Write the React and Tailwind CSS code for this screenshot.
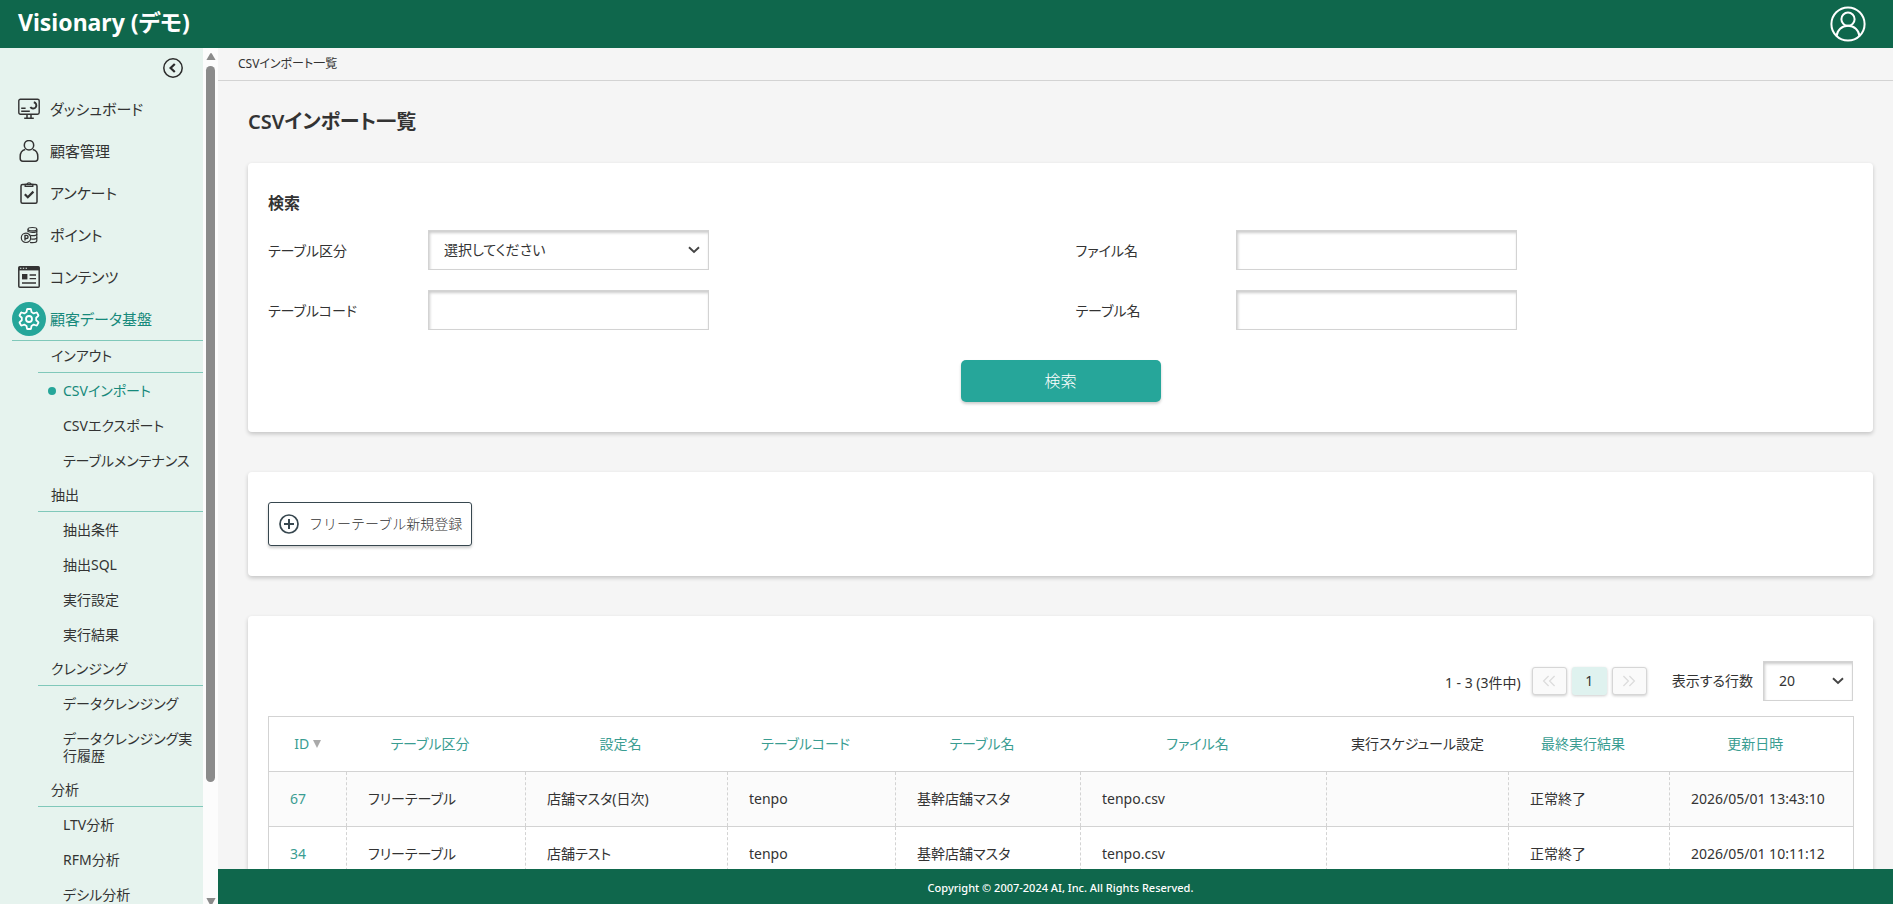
import React, { useState } from "react";

const DashboardIcon = () => (
  <svg viewBox="0 0 22 22" className="w-[22px] h-[22px]" fill="none" stroke="currentColor" strokeWidth="1.4">
    <rect x="0.8" y="1.2" width="20.4" height="15" rx="1.6" />
    <path d="M3.2 10.2h4.4M3.2 13.2h8.600" strokeWidth="1.600" />
    <path d="M15.800 4.200a3.200 3.200 0 1 1-3.400 4.800" strokeWidth="1.900" />
    <path d="M9 16.200v3.600M13 16.200v3.600M6.200 20.200h9.600" strokeWidth="1.500" />
  </svg>
);

const CustomerIcon = () => (
  <svg viewBox="0 0 22 22" className="w-[22px] h-[22px]" fill="none" stroke="currentColor" strokeWidth="1.5">
    <circle cx="11" cy="5.2" r="4.7" />
    <path d="M7.200 9.400C4 10.200 2.200 13 2.200 16.400v2.200c0 1.600 1 2.600 2.600 2.600h12.400c1.600 0 2.600-1 2.600-2.600v-2.200c0-3.400-1.800-6.200-5-7" />
  </svg>
);

const SurveyIcon = () => (
  <svg viewBox="0 0 22 22" className="w-[22px] h-[22px]" fill="none" stroke="currentColor" strokeWidth="1.5">
    <rect x="3" y="2.4" width="16" height="18.8" rx="1.5" />
    <path d="M7.200 2.400v2h7.600v-2l-1.600-.2a2.300 1.800 0 0 0-4.400 0z" strokeWidth="1.300" />
    <path d="M6.800 12.200l3 3 5.600-5.600" strokeWidth="2.200" />
  </svg>
);

const PointIcon = () => (
  <svg viewBox="0 0 22 22" className="w-[22px] h-[22px]" fill="none" stroke="currentColor" strokeWidth="1.2">
    <ellipse cx="14.4" cy="5.2" rx="4.4" ry="1.7" />
    <path d="M10 5.200v3M18.800 5.200v11.600c0 1.200-2 1.900-4.400 1.900-.9 0-1.700-.1-2.400-.3" />
    <path d="M10.200 7.400c.8.7 2.400 1 4.200 1 2.400 0 4.400-.7 4.400-1.700M12.400 11.400c.6.100 1.300.2 2 .2 2.400 0 4.400-.7 4.400-1.700M13 15c.5.100 1 .1 1.400.1 2.400 0 4.400-.7 4.400-1.700" />
    <circle cx="8" cy="13.8" r="4.7" />
    <path d="M7 16.600v-5.200h1.500a1.500 1.500 0 0 1 0 3.100H7" strokeWidth="1.400" />
  </svg>
);

const ContentsIcon = () => (
  <svg viewBox="0 0 22 22" className="w-[22px] h-[22px]" fill="none" stroke="currentColor" strokeWidth="1.5">
    <rect x="0.8" y="0.8" width="20.4" height="20.4" rx="1" />
    <path d="M0.800 2.600h20.400" strokeWidth="3.600" />
    <path d="M2 2.300h1.400M4.800 2.300h1.400M7.600 2.300h1.400" stroke="#e6f3ee" strokeWidth="1.100" />
    <rect x="4" y="8" width="5.4" height="5.4" fill="currentColor" stroke="none" />
    <path d="M11.600 9h6.400M11.600 12.600h6.400M4 17h14" strokeWidth="1.400" />
  </svg>
);

const GearIcon = () => (
  <svg viewBox="0 0 24 24" className="w-6 h-6" fill="none" stroke="currentColor" strokeWidth="1.8" strokeLinejoin="round">
    <circle cx="12" cy="12" r="3" />
    <path d="M10.600 2h2.800q.5 0 .6.500l.5 2.600 2.200 1.300 2.500-.9q.5-.2.800.3l1.400 2.400q.2.500-.2.800l-2 1.700v2.600l2 1.700q.4.300.2.800l-1.400 2.400q-.3.500-.8.300l-2.500-.9-2.200 1.300-.5 2.600q-.1.500-.6.500h-2.800q-.5 0-.6-.5l-.5-2.600-2.200-1.300-2.500.9q-.5.200-.8-.3l-1.400-2.400q-.2-.5.200-.8l2-1.700v-2.600l-2-1.700q-.4-.3-.2-.8L4 5.800q.3-.5.8-.3l2.500.9 2.200-1.300.5-2.600q.1-.5.600-.5z" />
  </svg>
);

const ChevronIcon = () => (
  <svg viewBox="0 0 12 8" className="w-3 h-2" fill="none" stroke="#444" strokeWidth="1.9">
    <path d="M1 1.200l5 4.800 5-4.800" />
  </svg>
);

const menu = [
  { label: "ダッシュボード", Icon: DashboardIcon },
  { label: "顧客管理", Icon: CustomerIcon },
  { label: "アンケート", Icon: SurveyIcon },
  { label: "ポイント", Icon: PointIcon },
  { label: "コンテンツ", Icon: ContentsIcon },
  { label: "顧客データ基盤", Icon: GearIcon, active: true },
];

const subMenu = [
  { title: "インアウト", items: ["CSVインポート", "CSVエクスポート", "テーブルメンテナンス"] },
  { title: "抽出", items: ["抽出条件", "抽出SQL", "実行設定", "実行結果"] },
  { title: "クレンジング", items: ["データクレンジング", "データクレンジング実行履歴"] },
  { title: "分析", items: ["LTV分析", "RFM分析", "デシル分析"] },
];

const columns = [
  { label: "ID", width: "w-[78px]", sortable: true, sorted: true },
  { label: "テーブル区分", width: "w-[179px]", sortable: true },
  { label: "設定名", width: "w-[202px]", sortable: true },
  { label: "テーブルコード", width: "w-[168px]", sortable: true },
  { label: "テーブル名", width: "w-[185px]", sortable: true },
  { label: "ファイル名", width: "w-[246px]", sortable: true },
  { label: "実行スケジュール設定", width: "w-[182px]", sortable: false },
  { label: "最終実行結果", width: "w-[161px]", sortable: true },
  { label: "更新日時", width: "w-[184px]", sortable: true },
];

const rows = [
  ["67", "フリーテーブル", "店舗マスタ(日次)", "tenpo", "基幹店舗マスタ", "tenpo.csv", "", "正常終了", "2026/05/01 13:43:10"],
  ["34", "フリーテーブル", "店舗テスト", "tenpo", "基幹店舗マスタ", "tenpo.csv", "", "正常終了", "2026/05/01 10:11:12"],
];

const fieldClass =
  "h-10 border border-[#d3d3d3] bg-white px-[15px] text-sm text-[#333] shadow-[inset_1px_2px_3px_rgba(0,0,0,0.2)] outline-none";

const cardClass = "bg-white rounded px-5 shadow-[0_2px_4px_rgba(0,0,0,0.2)]";

function Header() {
  return (
    <header className="h-12 shrink-0 bg-[#0f674c] text-white flex items-center justify-between pl-[18px] pr-[27px]">
      <a href="#" className="text-[23px] leading-10 pb-1 font-bold">
        Visionary (デモ)
      </a>
      <button type="button" aria-label="アカウント">
        <svg viewBox="0 0 36 36" className="w-9 h-9" fill="none" stroke="currentColor" strokeWidth="2">
          <circle cx="18" cy="18" r="16.6" />
          <circle cx="18" cy="13.2" r="6.6" />
          <path d="M6.600 30c.6-6 5-10.200 11.400-10.200S28.800 24 29.400 30" />
        </svg>
      </button>
    </header>
  );
}

function Sidebar() {
  return (
    <aside className="w-[218px] shrink-0 flex overflow-hidden">
      <nav className="flex-1 bg-[#e6f3ee] overflow-hidden">
        <div className="h-10 flex justify-end pt-[10px] pr-5">
          <button type="button" aria-label="メニューを閉じる" className="h-5">
            <svg viewBox="0 0 20 20" className="w-5 h-5" fill="none" stroke="#2b2b2b">
              <circle cx="10" cy="10" r="9.2" strokeWidth="1.5" />
              <path d="M11.800 6L7.600 10l4.200 4" strokeWidth="2.200" />
            </svg>
          </button>
        </div>

        <ul className="pl-3">
          {menu.map(({ label, Icon, active }) => (
            <li key={label}>
              <a
                href="#"
                className={
                  active
                    ? "flex items-center gap-1 h-[43px] border-b border-[#80c8ba] text-[15px] text-[#16897b]"
                    : "flex items-center gap-1 h-[42px] text-[15px]"
                }
              >
                <span
                  className={
                    active
                      ? "w-[34px] h-[34px] rounded-full bg-[#26a69a] text-white flex items-center justify-center"
                      : "w-[34px] h-[34px] flex items-center justify-center"
                  }
                >
                  <Icon />
                </span>
                {label}
              </a>
            </li>
          ))}
        </ul>

        <div className="pl-[38px] text-sm leading-[17px]">
          {subMenu.map((group) => (
            <section key={group.title} className="group">
              <h3 className="pt-2 group-first:pt-[6px] pb-2 pl-[13px] border-b border-[#80c8ba]">
                {group.title}
              </h3>
              <ul>
                {group.items.map((item) => (
                  <li key={item}>
                    {item === "CSVインポート" ? (
                      <a href="#" className="flex items-center gap-[7px] py-[9px] pl-[10px] text-[#16897b]">
                        <span className="w-2 h-2 rounded-full bg-[#26a69a]" />
                        {item}
                      </a>
                    ) : (
                      <a href="#" className="block py-[9px] pl-[25px] pr-[9px]">
                        {item}
                      </a>
                    )}
                  </li>
                ))}
              </ul>
            </section>
          ))}
        </div>
      </nav>

      {/* scroll bar */}
      <div className="w-[15px] bg-[#fcfcfc] flex flex-col items-center pt-[5px]">
        <svg viewBox="0 0 10 7" className="w-[10px] h-[7px] shrink-0" fill="#8b8b8b">
          <path d="M4.200.6a1 1 0 0 1 1.600 0L9.600 7H.4z" />
        </svg>
        <div className="w-[9px] mt-[6px] basis-[716px] rounded-full bg-[#8b8b8b]" />
        <div className="flex-1" />
        <svg viewBox="0 0 10 6" className="w-[10px] h-[6px] shrink-0" fill="#8b8b8b">
          <path d="M.4 0h9.200L6.400 6H3.600z" />
        </svg>
      </div>
    </aside>
  );
}

function TextField({ id, label }) {
  return (
    <div className="flex items-center">
      <label htmlFor={id} className="w-40 pt-[2px] text-sm">
        {label}
      </label>
      <input id={id} type="text" className={`${fieldClass} w-[281px]`} />
    </div>
  );
}

function SearchCard() {
  return (
    <form className={`${cardClass} py-[30px]`} onSubmit={(e) => e.preventDefault()}>
      <h2 className="text-base leading-5 font-semibold mb-[17px]">検索</h2>
      <div className="grid grid-cols-2 gap-x-[30px] gap-y-5">
        <div className="flex items-center">
          <label htmlFor="table-type" className="w-40 pt-[2px] text-sm">
            テーブル区分
          </label>
          <div className="relative w-[281px]">
            <select id="table-type" className={`${fieldClass} w-full appearance-none`}>
              <option>選択してください</option>
            </select>
            <span className="absolute right-[9px] top-4 pointer-events-none">
              <ChevronIcon />
            </span>
          </div>
        </div>
        <TextField id="file-name" label="ファイル名" />
        <TextField id="table-code" label="テーブルコード" />
        <TextField id="table-name" label="テーブル名" />
      </div>
      <div className="mt-[30px] flex justify-center">
        <button
          type="submit"
          className="w-[200px] h-[42px] rounded-[5px] bg-[#26a69a] text-white text-base font-light shadow-[0_2px_3px_rgba(0,0,0,0.2)]"
        >
          検索
        </button>
      </div>
    </form>
  );
}

function Pagination() {
  const [size, setSize] = useState("20");

  return (
    <div className="flex items-center justify-end mb-[15px] text-sm">
      <span className="mr-[11px] pt-1">1 - 3 (3件中)</span>
      <div className="flex gap-[5px]">
        <button
          type="button"
          disabled
          aria-label="前へ"
          className="w-[35px] h-7 flex items-center justify-center rounded-[3px] border border-[#d6d6d6] bg-[#fafafa] text-[#dcdcdc] shadow-[0_1px_3px_rgba(0,0,0,0.2)]"
        >
          <svg viewBox="0 0 14 12" className="w-[14px] h-3" fill="none" stroke="currentColor" strokeWidth="1.3">
            <path d="M6.600 1l-5 5 5 5M12.600 1l-5 5 5 5" />
          </svg>
        </button>
        <button
          type="button"
          className="w-[35px] h-7 rounded-[3px] bg-[#dff2ef] shadow-[0_1px_3px_rgba(0,0,0,0.2)]"
        >
          1
        </button>
        <button
          type="button"
          disabled
          aria-label="次へ"
          className="w-[35px] h-7 flex items-center justify-center rounded-[3px] border border-[#d6d6d6] bg-[#fafafa] text-[#dcdcdc] shadow-[0_1px_3px_rgba(0,0,0,0.2)]"
        >
          <svg viewBox="0 0 14 12" className="w-[14px] h-3" fill="none" stroke="currentColor" strokeWidth="1.3">
            <path d="M1.400 1l5 5-5 5M7.400 1l5 5-5 5" />
          </svg>
        </button>
      </div>
      <label htmlFor="page-size" className="ml-[25px] mr-[10px]">
        表示する行数
      </label>
      <div className="relative w-[90px]">
        <select
          id="page-size"
          value={size}
          onChange={(e) => setSize(e.target.value)}
          className={`${fieldClass} w-full appearance-none`}
        >
          <option value="20">20</option>
          <option value="50">50</option>
          <option value="100">100</option>
        </select>
        <span className="absolute right-[9px] top-4 pointer-events-none">
          <ChevronIcon />
        </span>
      </div>
    </div>
  );
}

function ImportTable() {
  return (
    <table className="w-full table-fixed border-collapse border border-[#d3d3d3] text-sm">
      <thead>
        <tr className="h-[55px]">
          {columns.map((col) => (
            <th key={col.label} className={`${col.width} font-normal whitespace-nowrap`}>
              {col.sortable ? (
                <a href="#" className="text-[#3a9d92]">
                  {col.label}
                  <svg
                    viewBox="0 0 8 8"
                    className="inline-block w-2 h-2 ml-1 mb-[2px]"
                    fill={col.sorted ? "#aaa" : "none"}
                  >
                    <path d="M0 0h8L4 8z" />
                  </svg>
                </a>
              ) : (
                col.label
              )}
            </th>
          ))}
        </tr>
      </thead>
      <tbody>
        {rows.map((row) => (
          <tr key={row[0]} className="h-[55px] border-t border-[#d3d3d3] odd:bg-[#fbfbfb]">
            {row.map((cell, i) => (
              <td
                key={i}
                className="px-[21px] whitespace-nowrap border-r border-dashed border-[#d3d3d3] last:border-solid"
              >
                {i === 0 ? (
                  <a href="#" className="text-[#3a9d92]">
                    {cell}
                  </a>
                ) : (
                  cell
                )}
              </td>
            ))}
          </tr>
        ))}
      </tbody>
    </table>
  );
}

export default function App() {
  return (
    <div className="h-screen flex flex-col overflow-hidden bg-[#f5f5f5] text-[#333] font-['Noto_Sans','Noto_Sans_CJK_JP',sans-serif] [font-feature-settings:'palt']">
      <Header />
      <div className="flex-1 min-h-0 flex">
        <Sidebar />
        <div className="flex-1 min-w-0 flex flex-col">
          <main className="flex-1 min-h-0 overflow-y-auto [scrollbar-width:none]">
            <div className="h-[33px] border-b border-[#d3d3d3] pl-5 text-xs leading-8">
              CSVインポート一覧
            </div>
            <div className="pl-[30px] pr-5">
              <h1 className="py-[26px] text-xl leading-[30px] font-semibold">CSVインポート一覧</h1>
              <div className="flex flex-col gap-10">
                <SearchCard />
                <div className={`${cardClass} py-[30px]`}>
                  <button
                    type="button"
                    className="h-11 w-[204px] flex items-center gap-[10px] pl-[10px] rounded-[3px] border border-[#37474f] bg-white text-sm font-light whitespace-nowrap shadow-[0_2px_3px_rgba(0,0,0,0.2)] [font-feature-settings:normal]"
                  >
                    <svg viewBox="0 0 20 20" className="w-5 h-5 shrink-0" fill="none" stroke="#37474f">
                      <circle cx="10" cy="10" r="9" strokeWidth="1.7" />
                      <path d="M10 5v10M5 10h10" strokeWidth="2" />
                    </svg>
                    フリーテーブル新規登録
                  </button>
                </div>
                <div className={`${cardClass} pt-[45px] pb-[30px]`}>
                  <Pagination />
                  <ImportTable />
                </div>
              </div>
            </div>
          </main>
          <footer className="h-[35px] shrink-0 bg-[#0f674c] text-white text-[11px] leading-[38px] font-medium text-center pl-[10px]">
            Copyright © 2007-2024 AI, Inc. All Rights Reserved.
          </footer>
        </div>
      </div>
    </div>
  );
}
